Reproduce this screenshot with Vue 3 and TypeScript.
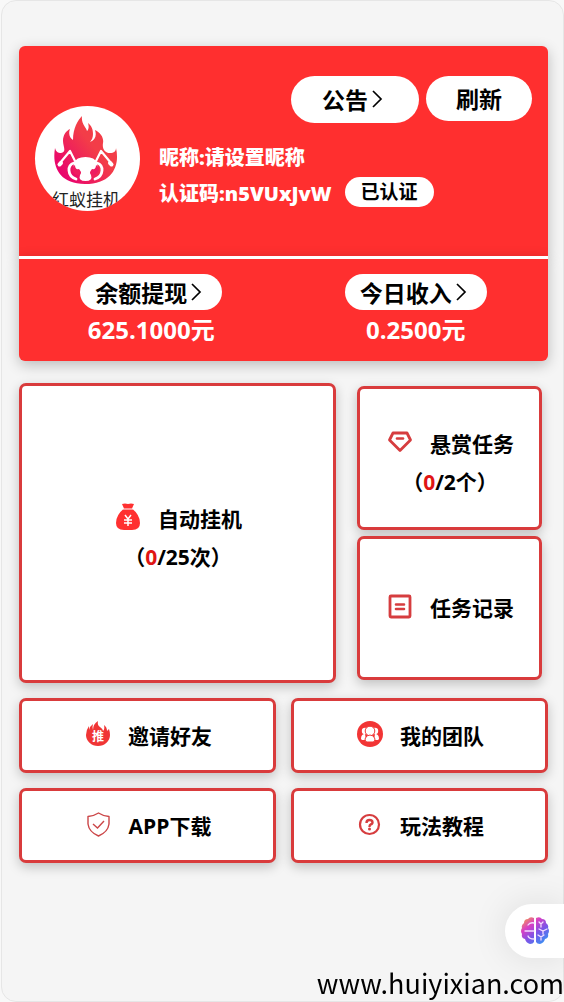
<script setup lang="ts">
interface Stat {
  label: string
  amount: string
}

interface Shortcut {
  icon: string
  label: string
}

const stats: Stat[] = [
  { label: '余额提现', amount: '625.1000元' },
  { label: '今日收入', amount: '0.2500元' },
]

const shortcuts: Shortcut[] = [
  { icon: 'invite', label: '邀请好友' },
  { icon: 'team', label: '我的团队' },
  { icon: 'shield', label: 'APP下载' },
  { icon: 'help', label: '玩法教程' },
]
</script>

<template>
  <main class="page">
    <section class="profile">
      <div class="avatar">
        <svg class="flame" viewBox="0 0 64 70" aria-hidden="true">
          <defs>
            <linearGradient id="flameFill" x1="0.9" y1="0.2" x2="0.1" y2="0.9">
              <stop offset="0.35" stop-color="#f33d48" />
              <stop offset="1" stop-color="#e80070" />
            </linearGradient>
          </defs>
          <path fill="url(#flameFill)" d="M28 1C27 9 32 12 33 16C35 14 35 11 34 8C38 11 39 15 39 19C39 22 38 25 36 27C41 25 43 21 41 15C47 18 50 23 49 28C48 34 51 38 56 38C60 38 62 36 62 33C66 50 59 69 31 69C4 69-2 50 1 33C2 37 4 38 7 38C13 37 9 31 9 26C9 20 12 16 16 14C14 19 16 23 19 25C19 13 24 5 28 1Z" />
          <g fill="none" stroke="#fff" stroke-linecap="round" stroke-linejoin="round">
            <path stroke-width="2.200" d="M21 46L16 36L6 48M42 46L47 36L57 48" />
            <path stroke-width="4" d="M7 48L5.500 49.500M56 48L57.500 49.500" />
            <path stroke-width="2.800" d="M20 48C13 50 13 61 22 64M43 48C50 50 50 61 41 64" />
          </g>
          <path fill="#fff" d="M20 48Q22 42 31.500 42Q41 42 43 48Q45 56 37 56Q35 57 37 60Q39 66 31.500 66Q24 66 26 60Q28 57 26 56Q18 56 20 48Z" />
          <path fill="#ee1d60" d="M21 50Q16 53 20 58Q21 60 25 60Q28 57 25 54Q21 55 21 50ZM42 50Q47 53 43 58Q42 60 38 60Q35 57 38 54Q42 55 42 50Z" />
        </svg>
        <span class="brand">红蚁挂机</span>
      </div>
      <div class="details">
        <div class="actions">
          <button type="button" class="pill notice">
            公告
            <svg class="chevron" viewBox="0 0 20 24" aria-hidden="true"><path d="M5 4L13 12L5 20" /></svg>
          </button>
          <button type="button" class="pill refresh">刷新</button>
        </div>
        <div class="line">昵称:请设置昵称</div>
        <div class="line">
          <span>认证码:n5VUxJvW</span>
          <span class="badge">已认证</span>
        </div>
      </div>
    </section>

    <section class="balance">
      <div v-for="stat in stats" :key="stat.label" class="stat">
        <button type="button" class="pill small">
          {{ stat.label }}
          <svg class="chevron" viewBox="0 0 20 24" aria-hidden="true"><path d="M5 4L13 12L5 20" /></svg>
        </button>
        <div class="amount">{{ stat.amount }}</div>
      </div>
    </section>

    <section class="tasks">
      <button type="button" class="tile auto">
        <span class="title">
          <svg class="icon" viewBox="0 0 28 28" aria-hidden="true">
            <path fill="#ff3030" d="M8 1Q11 0 14 1Q17 0 20 1L18 5.500Q26 12 26 20Q26 27 18 27H10Q2 27 2 20Q2 12 10 5.500Z" />
            <path fill="none" stroke="#fff" stroke-width="1" d="M9 6H19" />
            <path fill="none" stroke="#fff" stroke-width="1.500" d="M11 12L14 16L17 12M14 16V23M10 17H18M10 20H18" />
          </svg>
          自动挂机
        </span>
        <span class="count">（<b>0</b>/25次）</span>
      </button>
      <div class="side">
        <button type="button" class="tile">
          <span class="title">
            <svg class="icon" viewBox="0 0 28 28" aria-hidden="true">
              <path fill="none" stroke="#d63d3f" stroke-width="2.800" stroke-linejoin="round" d="M7 5H21L24.500 12L14 22.500L3.500 12Z" />
              <path fill="none" stroke="#d63d3f" stroke-width="2.600" stroke-linecap="round" d="M11 10.500H17" />
            </svg>
            悬赏任务
          </span>
          <span class="count">（<b>0</b>/2个）</span>
        </button>
        <button type="button" class="tile record">
          <span class="title">
            <svg class="icon" viewBox="0 0 28 28" aria-hidden="true">
              <rect x="4" y="4" width="20" height="21" rx="1" fill="none" stroke="#d63d3f" stroke-width="2.800" />
              <path fill="none" stroke="#d63d3f" stroke-width="2.600" stroke-linecap="round" d="M10 12.500H18M10 17H18" />
            </svg>
            任务记录
          </span>
        </button>
      </div>
    </section>

    <nav class="shortcuts">
      <button v-for="item in shortcuts" :key="item.label" type="button" class="tile">
        <span class="title">
          <svg v-if="item.icon === 'invite'" class="icon" viewBox="0 0 28 28" aria-hidden="true">
            <path fill="#f03535" d="M14 1Q13 5 16 7Q19 9 19 11Q21 9 20 5Q23 7 23 11L25 9Q26 12 26 15A12 11 0 0 1 2 15Q2 10 5 6V10Q6 6 9 4Q8 7 9 10Q9 4 14 1Z" />
            <text x="14" y="21" text-anchor="middle" class="glyph">推</text>
          </svg>
          <svg v-else-if="item.icon === 'team'" class="icon" viewBox="0 0 28 28" aria-hidden="true">
            <circle cx="14" cy="14" r="13" fill="#f23535" />
            <g fill="#fff">
              <circle cx="9" cy="11" r="3.200" />
              <circle cx="19" cy="11" r="3.200" />
              <path d="M5 19Q5 14 9 14L10 20H6ZM23 19Q23 14 19 14L18 20H22Z" />
            </g>
            <g fill="#fff" stroke="#f23535">
              <circle cx="14" cy="11" r="4.800" />
              <path d="M9 19Q10 15 14 15Q18 15 19 19Q19 22 17 22H11Q9 22 9 19Z" />
            </g>
          </svg>
          <svg v-else-if="item.icon === 'shield'" class="icon" viewBox="0 0 28 28" aria-hidden="true">
            <path fill="none" stroke="#cb4547" stroke-width="1.400" stroke-linejoin="round" d="M13.500 3Q18 6 24 6.500V14Q23 22 13.500 26Q4 22 3 14V6.500Q9 6 13.500 3Z" />
            <path fill="none" stroke="#cb4547" stroke-width="1.400" d="M8 14L12.500 18L19 11" />
          </svg>
          <svg v-else class="icon" viewBox="0 0 28 28" aria-hidden="true">
            <circle cx="13.500" cy="14.500" r="9.500" fill="none" stroke="#d63d3f" stroke-width="2.200" />
            <path fill="none" stroke="#d63d3f" stroke-width="2.400" d="M10.500 13Q10.500 10 13.500 10T16.500 12.500Q16.500 14 14.500 14.500Q13.500 15 13.500 17" />
            <circle cx="13.500" cy="19" r="1.500" fill="#d63d3f" />
          </svg>
          {{ item.label }}
        </span>
      </button>
    </nav>

    <button type="button" class="assistant" aria-label="AI">
      <svg viewBox="0 0 28 28" aria-hidden="true">
        <defs>
          <linearGradient id="brainFill" x1="0.1" y1="0" x2="0.9" y2="1">
            <stop offset="0" stop-color="#f6a04a" />
            <stop offset="0.3" stop-color="#d83fc5" />
            <stop offset="0.6" stop-color="#7a55e8" />
            <stop offset="1" stop-color="#2f9cf5" />
          </linearGradient>
        </defs>
        <path fill="url(#brainFill)" d="M13 1Q9-1 7 2Q3 2 3 6Q0 8 1 11Q-1 14 1 17Q0 21 4 22Q5 26 9 27Q12 27 13 25ZM15 1Q19-1 21 2Q25 2 25 6Q28 8 27 11Q29 14 27 17Q28 21 24 22Q23 26 19 27Q16 27 15 25Z" />
        <path fill="none" stroke="#f3dcff" stroke-width="1.300" stroke-linecap="round" d="M7 8Q9 5 13 6M4 14H13M7 19Q8 22 13 22M18 5L20 7L22 5M20 7V10M18 12L22 14L26 12M22 14V17M17 18L20 20L23 18M20 20V23" />
      </svg>
    </button>
    <footer class="site">www.huiyixian.com</footer>
  </main>
</template>

<style>
body {
  background: #f8f8f8;
}
</style>

<style scoped>
.page {
  position: relative;
  box-sizing: border-box;
  min-height: 100vh;
  margin-left: 1px;
  padding: 45px 15px 0 17px;
  border: 1px solid #e6e6e6;
  border-radius: 15px;
  background: #f5f5f5;
  color: #000;
  font-family: "Open Sans", "Noto Sans CJK SC", sans-serif;
}

button {
  border: 0;
  padding: 0;
  background: #fff;
  color: #000;
  font-family: inherit;
  cursor: pointer;
}

.profile,
.balance {
  background: #ff2f2f;
  box-shadow: 0 4px 14px rgba(0, 0, 0, 0.24);
  color: #fff;
}

.profile {
  display: grid;
  grid-template-columns: 105px 1fr;
  gap: 19px;
  padding: 30px 16px 45px;
  border-radius: 6px 6px 0 0;
}

.avatar {
  display: flex;
  flex-direction: column;
  align-items: center;
  box-sizing: border-box;
  width: 105px;
  height: 105px;
  margin-top: 30px;
  padding: 9px 3px 0 0;
  border-radius: 50%;
  background: #fff;
  overflow: hidden;
}

.flame {
  flex: none;
  width: 64px;
  height: 70px;
}

.brand {
  margin-top: 3px;
  color: #222;
  font-size: 17px;
  line-height: 24px;
  white-space: nowrap;
}

.actions {
  display: flex;
  justify-content: flex-end;
  align-items: flex-start;
  gap: 7px;
  margin-bottom: 15px;
}

.pill {
  display: flex;
  align-items: center;
  border-radius: 24px;
  font-size: 23px;
  font-weight: 600;
  white-space: nowrap;
}

.notice {
  height: 47px;
  padding: 0 31px 2px;
}

.refresh {
  height: 45px;
  padding: 0 30px 1px;
}

.small {
  height: 36px;
  padding: 0 15px 1px;
}

.chevron {
  width: 20px;
  height: 24px;
  fill: none;
  stroke: #000;
  stroke-width: 1.7;
}

.line {
  display: flex;
  align-items: center;
  gap: 13px;
  height: 36px;
  font-size: 20px;
  font-weight: 900;
  white-space: nowrap;
}

.badge {
  padding: 0 16px;
  border-radius: 15px;
  background: #fff;
  color: #000;
  font-size: 19px;
  font-weight: 600;
  line-height: 30px;
}

.balance {
  display: grid;
  grid-template-columns: 1fr 1fr;
  box-sizing: border-box;
  min-height: 105px;
  padding-top: 15px;
  border-top: 3px solid #fff;
  border-radius: 0 0 6px 6px;
}

.stat {
  display: flex;
  flex-direction: column;
  align-items: center;
}

.amount {
  font-size: 24px;
  font-weight: 700;
  line-height: 40px;
}

.tasks {
  display: grid;
  grid-template-columns: 12fr 7fr;
  gap: 21px;
  margin-top: 22px;
  padding-right: 6px;
}

.side {
  display: grid;
  grid-template-rows: 1fr 1fr;
  gap: 6px;
  padding: 3px 0;
}

.tile {
  display: flex;
  flex-direction: column;
  align-items: center;
  justify-content: center;
  box-sizing: border-box;
  min-height: 75px;
  padding: 0 0 0 1px;
  border: 3px solid #d93b3c;
  border-radius: 7px;
  box-shadow: 0 4px 12px rgba(0, 0, 0, 0.22);
  font-size: 21px;
  font-weight: 700;
}

.tasks .tile {
  padding-top: 9px;
}

.tasks .record {
  padding-top: 0;
}

.auto {
  min-height: 300px;
}

.title {
  display: flex;
  align-items: center;
  gap: 16px;
  line-height: 38px;
  white-space: nowrap;
}

.icon {
  flex: none;
  width: 28px;
  height: 28px;
  margin-bottom: 4px;
}

.glyph {
  fill: #fff;
  font-size: 12px;
  font-weight: 700;
}

.count {
  line-height: 38px;
  white-space: nowrap;
}

.count b {
  color: #e01515;
  font-weight: 700;
}

.shortcuts {
  display: grid;
  grid-template-columns: 1fr 1fr;
  gap: 15px;
  margin-top: 15px;
}

.assistant {
  position: fixed;
  right: 0;
  bottom: 44px;
  display: flex;
  align-items: center;
  width: 59px;
  height: 54px;
  padding-left: 16px;
  border-radius: 27px 0 0 27px;
  box-shadow: 0 0 36px rgba(0, 0, 0, 0.1);
}

.assistant svg {
  width: 28px;
  height: 28px;
}

.site {
  position: fixed;
  right: 0;
  bottom: 0;
  font-family: "Noto Sans CJK SC", sans-serif;
  font-size: 27px;
  line-height: 38px;
}
</style>
